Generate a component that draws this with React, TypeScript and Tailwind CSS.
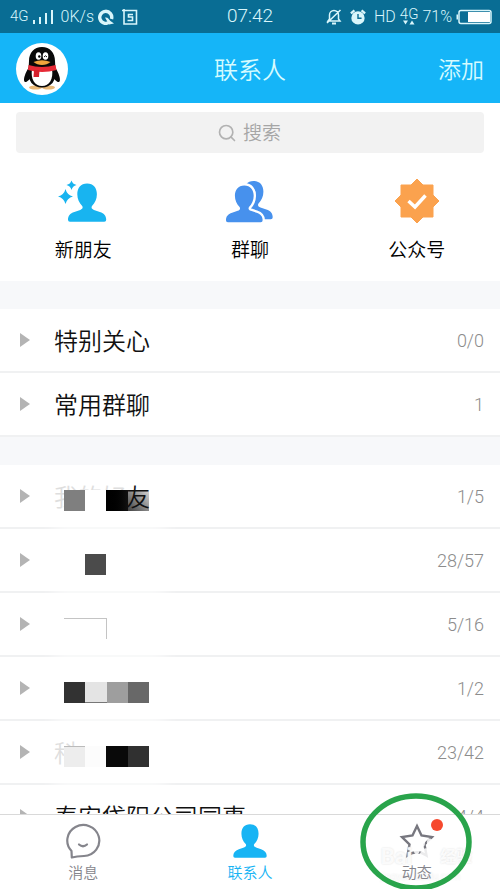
import React from 'react';
import { Search } from 'lucide-react';

const PERSON_PATH =
  'M20 0.5C13.5 0.5 10 5 10 11.5C10 16.5 12 20.5 15 23.5C16 25 15.5 26.5 13 27.5L7 29.5C2.5 31 0.5 33.5 0.5 37.5Q0.5 39.5 2.5 39.5H37.5Q39.5 39.5 39.5 37.5C39.5 33.5 37.5 31 33 29.5L27 27.5C24.5 26.5 24 25 25 23.5C28 20.5 30 16.5 30 11.5C30 5 26.5 0.5 20 0.5Z';

interface Tile {
  left: number;
  width: number;
  className: string;
}

interface Group {
  name: string;
  count: string;
  // part of the name that stays readable on top of the mosaic
  visibleSuffix?: string;
  tiles?: Tile[];
}

const pinnedGroups: Group[] = [
  { name: '特别关心', count: '0/0' },
  { name: '常用群聊', count: '1' },
];

const friendGroups: Group[] = [
  {
    name: '我的好',
    visibleSuffix: '友',
    count: '1/5',
    tiles: [
      { left: 10, width: 21, className: 'bg-[#7f7f7f]' },
      { left: 31, width: 21, className: 'bg-white' },
      { left: 52, width: 22, className: 'bg-linear-to-r from-black to-[#111]' },
      { left: 74, width: 21, className: 'bg-linear-to-tr from-[#444] to-[#d8d8d8]' },
    ],
  },
  {
    name: '',
    count: '28/57',
    tiles: [{ left: 31, width: 21, className: 'bg-[#4b4b4b]' }],
  },
  {
    name: '',
    count: '5/16',
    tiles: [{ left: 10, width: 43, className: 'border-t border-r border-[#c4c4c4] bg-white' }],
  },
  {
    name: '',
    count: '1/2',
    tiles: [
      { left: 10, width: 21, className: 'bg-[#323232]' },
      { left: 31, width: 22, className: 'border-b border-[#777] bg-[#e4e4e4]' },
      { left: 53, width: 21, className: 'bg-[#9e9e9e]' },
      { left: 74, width: 21, className: 'bg-[#686868]' },
    ],
  },
  {
    name: '科',
    count: '23/42',
    tiles: [
      { left: 10, width: 21, className: 'border-t border-[#bbb] bg-[#ededed]' },
      { left: 31, width: 21, className: 'bg-[#fcfcfc]' },
      { left: 52, width: 22, className: 'bg-[#090909]' },
      { left: 74, width: 21, className: 'bg-[#303030]' },
    ],
  },
  { name: '泰安岱阳公司同事', count: '4/4' },
];

function Penguin() {
  return (
    <svg viewBox="0 0 52 52" className="size-13" aria-hidden="true">
      <circle cx="26" cy="26" r="26" fill="#fff" />
      <ellipse cx="19.500" cy="44.500" rx="6.500" ry="2" fill="#e9b978" />
      <ellipse cx="32.500" cy="44.500" rx="6.500" ry="2" fill="#e9b978" />
      <path d="M14 23C9 29 6.500 38 9 39C11 39.500 14 36 17 32ZM38 23C43 29 45.500 38 43 39C41 39.500 38 36 35 32Z" fill="#090909" />
      <path d="M26 4C18 4 13 10 13 18L12.500 27C11.500 38 17 44.500 26 44.500S40.500 38 39.500 27L39 18C39 10 34 4 26 4Z" fill="#090909" />
      <path d="M16 26C14.500 36 18.500 43 26 43S37.500 36 36 26Z" fill="#fff" />
      <path d="M12.500 22Q26 26 39.500 22L40.500 27Q26 31 12 27Z" fill="#e62a36" />
      <path d="M18 27H23.500L23 34H17.500Z" fill="#d5202d" />
      <ellipse cx="22.500" cy="13" rx="2.800" ry="3.800" fill="#fff" />
      <ellipse cx="29.500" cy="13" rx="2.800" ry="3.800" fill="#fff" />
      <circle cx="23.300" cy="13.500" r="1.200" />
      <path d="M28 14Q29.500 11.500 31 14" fill="none" stroke="#111" />
      <path d="M17.500 19Q26 15.500 34.500 19Q31 22 26 22T17.500 19Z" fill="#f0a43c" />
    </svg>
  );
}

function StatusBar() {
  return (
    <div className="grid h-[33px] shrink-0 grid-cols-[1fr_auto_1fr] items-center bg-[#096d94] px-2 text-base text-[#d9f6fb]">
      <div className="flex items-center gap-1">
        <span className="ml-0.5 text-[15px]">4G</span>
        <svg viewBox="0 0 20 16" className="h-4 w-5" stroke="currentColor" strokeWidth="2" aria-hidden="true">
          <path d="M1 15V11M7 15V8M13 15V4M19 15V1" />
        </svg>
        <span className="ml-1">0K/s</span>
        <svg viewBox="0 0 16 16" className="size-4" aria-hidden="true">
          <path d="M11.500 13A6 6 0 1 1 13.500 10" fill="none" stroke="currentColor" strokeWidth="3.400" />
          <path d="M7 8.500C10 8 11 10.500 12.500 12L16 14.500L11 15.500Z" fill="currentColor" />
        </svg>
        <svg viewBox="0 0 16 16" className="ml-1 size-4" fill="none" stroke="currentColor" aria-hidden="true">
          <path d="M0 1.500H14.500V15H2V0" strokeWidth="1.600" />
          <path d="M11 5.500H6.500V8H10.500V11.500H5.500" strokeWidth="1.600" />
        </svg>
      </div>
      <span className="text-[19px]">07:42</span>
      <div className="flex items-center justify-end gap-1">
        <svg viewBox="0 0 16 16" className="size-4" fill="none" stroke="currentColor" strokeWidth="1.500" aria-hidden="true">
          <path d="M2 12H14L12.500 10V6A4.500 4.500 0 0 0 3.500 6V10ZM1 14L14.500 1" />
          <path d="M6 14.500H10" strokeWidth="2" />
        </svg>
        <svg viewBox="0 0 18 18" className="mx-1 size-4" aria-hidden="true">
          <circle cx="9" cy="10" r="7.500" fill="currentColor" />
          <path d="M1 5L5 1.500M17 5L13 1.500" stroke="currentColor" strokeWidth="2.500" />
          <path d="M9 5.500V10.500H13" fill="none" stroke="#096d94" strokeWidth="1.600" />
        </svg>
        <span>HD</span>
        <span className="flex flex-col items-center">
          <span className="text-[15px] leading-3">4G</span>
          <svg viewBox="0 0 12 5" className="h-[5px] w-3" fill="currentColor" aria-hidden="true">
            <path d="M0 0.500H5L2.500 4.500ZM6.500 4.500H11.500L9 0.500Z" />
          </svg>
        </span>
        <span>71%</span>
        <svg viewBox="0 0 36 16" className="h-4 w-9" aria-hidden="true">
          <rect x="3" y="1.500" width="32" height="13" rx="2" fill="none" stroke="currentColor" strokeWidth="1.500" />
          <path d="M0.500 5.500H2V10.500H0.500Z" fill="currentColor" />
          <rect x="12" y="3" width="22" height="10" fill="#fff" />
        </svg>
      </div>
    </div>
  );
}

function Shortcut({ label, children }: { label: string; children: React.ReactNode }) {
  return (
    <button className="flex flex-1 flex-col items-center gap-2 text-[19px] leading-8 text-black">
      {children}
      {label}
    </button>
  );
}

function GroupRow({ group }: { group: Group }) {
  return (
    <li className="border-b-2 border-[#f0f1f2] bg-white">
      <button className="flex h-[62px] w-full items-center pr-4 pl-5 text-left">
        <svg viewBox="0 0 10 14" className="h-3.5 w-2.5" fill="#b4b4b4" aria-hidden="true">
          <path d="M0 0L10 7L0 14Z" />
        </svg>
        <span className="relative ml-6 flex h-9 flex-1 items-center pt-1 text-2xl text-[#111]">
          {group.tiles && <span className="absolute -bottom-5 h-3 w-28 bg-white blur-sm" />}
          <span className={group.tiles ? 'text-[#dedede]' : ''}>{group.name}</span>
          {group.tiles?.map((tile) => (
            <span
              key={tile.left}
              className={`absolute top-3 h-[21px] ${tile.className}`}
              style={{ left: tile.left, width: tile.width }}
            />
          ))}
          {group.visibleSuffix && <span className="relative">{group.visibleSuffix}</span>}
        </span>
        <span className="pt-0.5 text-lg font-light text-[#8c8c8c]">{group.count}</span>
      </button>
    </li>
  );
}

function Watermark() {
  return (
    <span className="absolute top-7 left-1/2 -ml-9 flex flex-col whitespace-nowrap text-white/85 [text-shadow:0_0_2px_#dcdcdc]">
      <span className="flex items-center text-[22px] leading-7 font-bold">
        Bai
        <svg viewBox="0 0 30 30" className="-mt-3 h-7 w-7" fill="currentColor" aria-hidden="true">
          <ellipse cx="5" cy="14" rx="3" ry="4.500" />
          <ellipse cx="11" cy="6" rx="3" ry="4.500" />
          <ellipse cx="19" cy="6" rx="3" ry="4.500" />
          <ellipse cx="25" cy="14" rx="3" ry="4.500" />
          <path d="M15 12C11 12 10 17 6 20C3 24 6 28 10 27.500Q15 26.500 20 27.500C24 28 27 24 24 20C20 17 19 12 15 12Z" />
        </svg>
        <span className="text-base">经验</span>
      </span>
      <span className="text-[10px] leading-3">jingyan.baidu.com</span>
    </span>
  );
}

function TabBar() {
  return (
    <nav className="relative flex h-[75px] shrink-0 border-t border-[#d9d9d9] bg-white text-[15px] leading-5 text-[#85858c]">
      <a href="#messages" className="flex flex-1 flex-col items-center gap-1 pt-2">
        <svg viewBox="0 0 36 36" className="size-9" fill="none" stroke="currentColor" strokeWidth="2.200" strokeLinecap="round" strokeLinejoin="round" aria-hidden="true">
          <path d="M6.500 28A16 15.500 0 1 1 19 33C15 33.200 11 33.500 6.800 34.500Z" />
          <path d="M14 21.500Q18 25 22 21.500" />
        </svg>
        消息
      </a>
      <a href="#contacts" className="flex flex-1 flex-col items-center gap-1 pt-2 text-[#17b4f4]">
        <svg viewBox="-1 -1 42 42" className="size-9" fill="currentColor" aria-hidden="true">
          <path d={PERSON_PATH} />
        </svg>
        联系人
      </a>
      <a href="#feed" className="relative flex flex-1 flex-col items-center gap-1 pt-2">
        <svg viewBox="0 0 36 36" className="size-9" fill="none" stroke="#77777f" strokeWidth="2.400" aria-hidden="true">
          <path d="M18 3L22.500 12.500L33 14L25.500 21.500L27.500 32.500Q18 26 8.500 32.500L10.500 21.500L3 14L13.500 12.500Z" />
        </svg>
        <Watermark />
        <span className="relative">动态</span>
        <span className="absolute top-1 left-1/2 ml-3.5 size-3 rounded-full bg-[#f6492e]" />
      </a>
      <svg viewBox="0 0 112 100" className="absolute -top-[22px] right-7 h-25 w-28" fill="none" aria-hidden="true">
        <ellipse cx="56" cy="49" rx="53" ry="46" stroke="#29a44b" strokeWidth="5.500" />
      </svg>
    </nav>
  );
}

export default function App() {
  return (
    <div className="flex h-screen flex-col overflow-hidden bg-[#f7f8fa] font-['Roboto','Noto_Sans_CJK_SC',sans-serif] font-[350]">
      <StatusBar />
      <header className="grid h-[70px] shrink-0 grid-cols-[1fr_auto_1fr] items-center bg-[#15b5f8] px-4 pt-0.5 text-2xl text-[#d5fbff]">
        <Penguin />
        <h1 className="pt-1">联系人</h1>
        <button className="justify-self-end pt-1 text-[23px]">添加</button>
      </header>
      <main className="min-h-0 flex-1 overflow-hidden">
        <section className="bg-white px-4 pt-[9px] pb-3.5">
          <label className="flex h-[41px] items-center justify-center gap-1.5 rounded-sm bg-[#f2f2f2] text-[#b2b2b2]">
            <Search className="size-5" aria-hidden="true" />
            <input
              type="text"
              aria-label="搜索"
              placeholder="搜索"
              className="w-10 pt-1 text-[19px] outline-none placeholder:text-[#a6a6a6]"
            />
          </label>
          <div className="-mx-4 flex pt-[26px]">
            <Shortcut label="新朋友">
              <svg viewBox="0 0 50 48" className="h-12 w-[50px]" fill="#18b4f0" aria-hidden="true">
                <path transform="translate(9.500 4) scale(0.980)" d={PERSON_PATH} />
                <path d="M7.500 10Q9 16 15 17.500Q9 19 7.500 25Q6 19 0 17.500Q6 16 7.500 10ZM13.500 1.500Q14.500 5 18.500 6Q14.500 7 13.500 11Q12.500 7 8.500 6Q12.500 5 13.500 1.500Z" />
              </svg>
            </Shortcut>
            <Shortcut label="群聊">
              <svg viewBox="0 0 50 48" className="h-12 w-[50px]" fill="#4791ed" aria-hidden="true">
                <path transform="translate(9 1.500) scale(0.980)" d={PERSON_PATH} />
                <path
                  transform="translate(0.500 6) scale(0.940)"
                  d={PERSON_PATH}
                  stroke="#fff"
                  strokeWidth="5"
                  paintOrder="stroke"
                />
              </svg>
            </Shortcut>
            <Shortcut label="公众号">
              <svg viewBox="0 2 48 48" className="size-12" aria-hidden="true">
                <path d="M24 2L30 8H40V18L46 24L40 30V40H30L24 46L18 40H8V30L2 24L8 18V8H18Z" fill="#fba24e" stroke="#fba24e" strokeLinejoin="round" />
                <path d="M15.500 24L22 30L32.500 18.500" fill="none" stroke="#fff" strokeWidth="3.500" />
              </svg>
            </Shortcut>
          </div>
        </section>
        <ul className="mt-7">
          {pinnedGroups.map((group) => (
            <GroupRow key={group.count} group={group} />
          ))}
        </ul>
        <ul className="mt-7">
          {friendGroups.map((group) => (
            <GroupRow key={group.count} group={group} />
          ))}
        </ul>
      </main>
      <TabBar />
    </div>
  );
}
